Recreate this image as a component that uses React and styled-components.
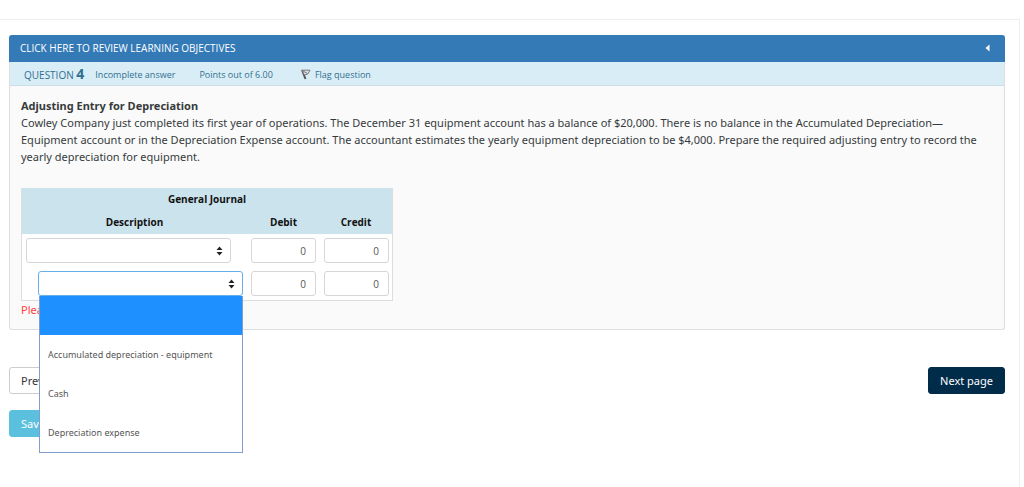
import React, { useState } from 'react'
import styled, { createGlobalStyle } from 'styled-components'

const GlobalStyle = createGlobalStyle`
* {
  box-sizing: border-box;
}
body {
  margin: 0;
  background: #fff;
  color: #373a3c;
  font-family: "Open Sans", "Noto Sans", sans-serif;
  font-size: 11px;
  line-height: 17px;
}
button, input, select {
  font-family: inherit;
}
`

const textFont = '"Noto Sans", "Open Sans", sans-serif'

const Page = styled.main`
min-height: calc(100vh - 19px);
margin: 19px 4px 0 0;
padding: 15px 14px 0 9px;
border-top: 1px solid #eee;
border-right: 1px solid #eee;
`

const Question = styled.section`
border: 1px solid #ddd;
border-top: none;
border-radius: 3px;
background: #fafafa;
`

const Objectives = styled.button`
display: flex;
justify-content: space-between;
align-items: center;
width: calc(100% + 2px);
height: 27px;
margin: 0 -1px;
padding: 0 15px 1px 11px;
border: none;
border-radius: 3px 3px 0 0;
background: #337ab7;
color: #fff;
font-size: 10px;
font-weight: 500;
`

const InfoBar = styled.div`
display: flex;
align-items: center;
height: 24px;
padding: 2px 14px 0;
border-bottom: 1px solid #ccdfe8;
background: #d9edf7;
color: #31708f;
font-size: 9px;
`

const QuestionNo = styled.h3`
margin: 0 11px 0 0;
font-size: 10px;
font-weight: 400;

strong {
  font-size: 14px;
  font-weight: 700;
}
`

const InfoText = styled.span`
margin-right: 24px;
`

const FlagLink = styled.a`
display: flex;
align-items: center;
gap: 4px;
margin-left: 4px;
color: inherit;
text-decoration: none;
`

const Content = styled.div`
padding: 11px;
font-family: ${textFont};
`

const Title = styled.h4`
margin: 0;
font-size: 11px;
font-weight: 700;
`

const Paragraph = styled.p`
margin: 0 0 23px;
`

const Journal = styled.table`
width: 372px;
table-layout: fixed;
border-collapse: separate;
border-spacing: 0;
border: 1px solid #ddd;
border-top: none;
background: #fff;
font-family: "Open Sans", "Noto Sans", sans-serif;

thead {
  background: #cbe3ec;
  color: #111;
  font-size: 10px;
}
`

const HeadCell = styled.th`
height: 23px;
padding: 0;
font-weight: 700;
`

const Cell = styled.td`
height: 33px;
padding: 4px;
padding-left: ${props => (props.$indent ? '16px' : '4px')};
vertical-align: top;
`

const SelectBox = styled.div`
position: relative;
width: 205px;

svg {
  position: absolute;
  top: 8px;
  right: 8px;
  pointer-events: none;
}
`

const Select = styled.select`
display: block;
appearance: none;
width: 100%;
height: 25px;
padding: 0 24px 0 8px;
border: 1px solid ${props => (props.$open ? '#66afe9' : '#d6d6d6')};
border-radius: 3px;
background: #fff;
color: #555;
font-size: 10px;
outline: none;
`

const Menu = styled.ul`
position: absolute;
top: 100%;
left: 1px;
right: 0;
z-index: 5;
margin: 0;
padding: 0;
border: 1px solid #7f9dcf;
border-top: none;
background: #fff;
list-style: none;
`

const MenuItem = styled.li`
display: flex;
align-items: center;
height: 39px;
padding: 0 8px;
background: ${props => (props.$active ? '#1e90ff' : '#fff')};
color: ${props => (props.$active ? '#fff' : '#555')};
font-family: ${textFont};
font-size: 9px;
`

const Amount = styled.input`
display: block;
width: 65px;
height: 25px;
padding: 0 9px;
border: 1px solid #d6d6d6;
border-radius: 3px;
background: #fff;
color: #555;
font-size: 10px;
text-align: right;
outline: none;
`

const Warning = styled.div`
color: #ff4040;
`

const Buttons = styled.div`
display: flex;
justify-content: space-between;
margin: 37px 0 16px;
`

const Button = styled.button`
height: 27px;
padding: 0 11px;
border: 1px solid ${props => props.$border || props.$bg};
border-radius: 3px;
background: ${props => props.$bg};
color: ${props => props.$color || '#fff'};
font-family: ${textFont};
font-size: 11px;
`

const accounts = ['', 'Accumulated depreciation - equipment', 'Cash', 'Depreciation expense']

const Arrows = () => (
  <svg width="7" height="10" viewBox="0 0 7 10" aria-hidden="true">
    <path d="M3.5 0.5 L6.5 4 H0.5 Z M0.5 6 H6.5 L3.5 9.5 Z" fill="#222" />
  </svg>
)

const Flag = () => (
  <svg width="10" height="11" viewBox="0 0 10 11" aria-hidden="true">
    <path d="M1 1 L4.5 10" stroke="#555" strokeWidth="2" fill="none" />
    <path d="M1 1.2 H9 L6.8 5 L3.4 6 Z" stroke="#777" strokeWidth="1" fill="#dde3e6" />
    <path d="M2 2 L6.5 4.5" stroke="#777" strokeWidth="1" fill="none" />
  </svg>
)

const AccountSelect = ({ label, startOpen }) => {
  const [account, setAccount] = useState('')
  const [open, setOpen] = useState(startOpen)

  const choose = (name) => {
    setAccount(name)
    setOpen(false)
  }

  return (
    <SelectBox>
      <Select aria-label={label} $open={open} value={account} onChange={e => choose(e.target.value)}>
        {accounts.map(name => <option key={name} value={name}>{name}</option>)}
      </Select>
      <Arrows />
      {open && (
        <Menu role="listbox" aria-label={label}>
          {accounts.map(name => (
            <MenuItem
              key={name}
              role="option"
              aria-selected={name === account}
              $active={name === account}
              onClick={() => choose(name)}
            >
              {name}
            </MenuItem>
          ))}
        </Menu>
      )}
    </SelectBox>
  )
}

const JournalRow = ({ number, indent }) => (
  <tr>
    <Cell $indent={indent}>
      <AccountSelect label={`Description ${number}`} startOpen={indent} />
    </Cell>
    <Cell><Amount aria-label={`Debit ${number}`} defaultValue="0" /></Cell>
    <Cell><Amount aria-label={`Credit ${number}`} defaultValue="0" /></Cell>
  </tr>
)

const App = () => (
  <Page>
    <GlobalStyle />
    <Question>
      <Objectives type="button">
        CLICK HERE TO REVIEW LEARNING OBJECTIVES
        <svg width="5" height="8" viewBox="0 0 5 8" aria-hidden="true">
          <path d="M4.5 0.5 V7.5 L0.5 4 Z" fill="#fff" />
        </svg>
      </Objectives>
      <InfoBar>
        <QuestionNo>QUESTION <strong>4</strong></QuestionNo>
        <InfoText>Incomplete answer</InfoText>
        <InfoText>Points out of 6.00</InfoText>
        <FlagLink href="#flag"><Flag />Flag question</FlagLink>
      </InfoBar>
      <Content>
        <Title>Adjusting Entry for Depreciation</Title>
        <Paragraph>
          Cowley Company just completed its first year of operations. The December 31 equipment
          account has a balance of $20,000. There is no balance in the Accumulated
          Depreciation—Equipment account or in the Depreciation Expense account. The accountant
          estimates the yearly equipment depreciation to be $4,000. Prepare the required adjusting
          entry to record the yearly depreciation for equipment.
        </Paragraph>
        <Journal>
          <colgroup>
            <col />
            <col width="73" />
            <col width="72" />
          </colgroup>
          <thead>
            <tr><HeadCell colSpan="3">General Journal</HeadCell></tr>
            <tr>
              <HeadCell>Description</HeadCell>
              <HeadCell>Debit</HeadCell>
              <HeadCell>Credit</HeadCell>
            </tr>
          </thead>
          <tbody>
            <JournalRow number={1} indent={false} />
            <JournalRow number={2} indent={true} />
          </tbody>
        </Journal>
        <Warning>Please answer all parts of the question.</Warning>
      </Content>
    </Question>
    <Buttons>
      <Button type="button" $bg="#fff" $border="#ccc" $color="#333">Previous page</Button>
      <Button type="button" $bg="#002b49">Next page</Button>
    </Buttons>
    <Button type="button" $bg="#5bc0de">Save</Button>
  </Page>
)

export default App
